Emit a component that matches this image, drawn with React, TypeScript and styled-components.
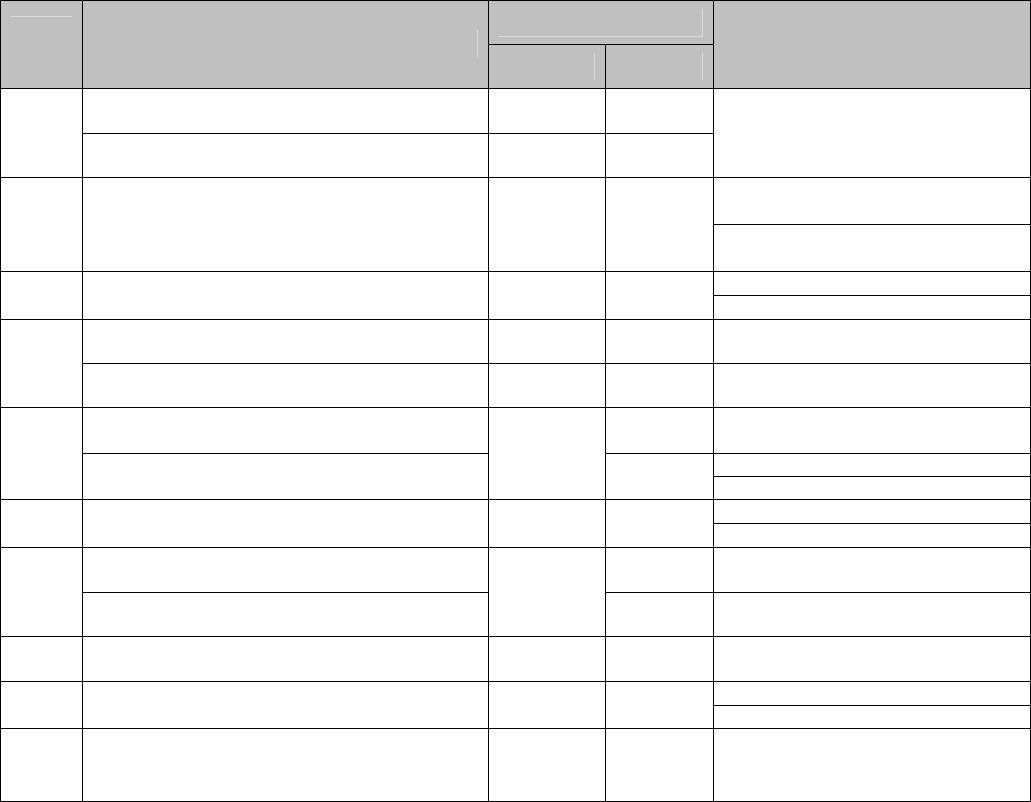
import React from "react";
import styled, { createGlobalStyle } from "styled-components";

const GlobalStyle = createGlobalStyle`
  html, body {
    margin: 0;
    padding: 0;
    background: #ffffff;
    font-family: "Liberation Sans", Arial, sans-serif;
  }
`;

// track heights, each includes the 1px bottom rule
const ROWS = [44, 44, 45, 44, 47, 47, 24, 24, 44, 44, 46, 23, 23, 24, 24, 45, 44, 45, 24, 23, 73];

const Sheet = styled.div`
  display: grid;
  grid-template-columns: 82px 406px 117px 108px 317px;
  grid-template-rows: ${ROWS.map((h) => `${h}px`).join(" ")};
  width: 1031px;
  box-sizing: border-box;
  border-top: 1px solid #000;
  border-left: 1px solid #000;
`;

interface CellProps {
  $row: number;
  $col: number;
  $rowSpan?: number;
  $colSpan?: number;
  $head?: boolean;
}

const Cell = styled.div<CellProps>`
  position: relative;
  box-sizing: border-box;
  grid-row: ${(p) => p.$row} / span ${(p) => p.$rowSpan || 1};
  grid-column: ${(p) => p.$col} / span ${(p) => p.$colSpan || 1};
  border-right: 1px solid #000;
  border-bottom: 1px solid #000;
  background: ${(p) => (p.$head ? "#c0c0c0" : "#ffffff")};
`;

// faint embossed marks left in the header cells
const Mark = styled.span<{ $x: number; $y: number; $w: number; $h: number }>`
  position: absolute;
  left: ${(p) => p.$x}px;
  top: ${(p) => p.$y}px;
  width: ${(p) => p.$w}px;
  height: ${(p) => p.$h}px;
  background: #dcdcdc;
`;

type Span = [number, number]; // [start track, span]

interface Group {
  start: number;
  span: number;
  c2: Span[];
  c3: Span[];
  c4: Span[];
  c5: Span[];
}

const whole = (s: number, n: number): Span[] => [[s, n]];
const each = (s: number, n: number): Span[] =>
  Array.from({ length: n }, (_, i) => [s + i, 1] as Span);

const groups: Group[] = [
  { start: 3, span: 2, c2: each(3, 2), c3: each(3, 2), c4: each(3, 2), c5: whole(3, 2) },
  { start: 5, span: 2, c2: whole(5, 2), c3: whole(5, 2), c4: whole(5, 2), c5: each(5, 2) },
  { start: 7, span: 2, c2: whole(7, 2), c3: whole(7, 2), c4: whole(7, 2), c5: each(7, 2) },
  { start: 9, span: 2, c2: each(9, 2), c3: each(9, 2), c4: each(9, 2), c5: each(9, 2) },
  {
    start: 11,
    span: 3,
    c2: [[11, 1], [12, 2]],
    c3: whole(11, 3),
    c4: [[11, 1], [12, 2]],
    c5: each(11, 3),
  },
  { start: 14, span: 2, c2: whole(14, 2), c3: whole(14, 2), c4: whole(14, 2), c5: each(14, 2) },
  { start: 16, span: 2, c2: each(16, 2), c3: whole(16, 2), c4: each(16, 2), c5: each(16, 2) },
  { start: 18, span: 1, c2: each(18, 1), c3: each(18, 1), c4: each(18, 1), c5: each(18, 1) },
  { start: 19, span: 2, c2: whole(19, 2), c3: whole(19, 2), c4: whole(19, 2), c5: each(19, 2) },
  { start: 21, span: 1, c2: each(21, 1), c3: each(21, 1), c4: each(21, 1), c5: each(21, 1) },
];

const App: React.FC = () => {
  return (
    <>
      <GlobalStyle />
      <Sheet>
        <Cell $head $row={1} $col={1} $rowSpan={2}>
          <Mark $x={10} $y={15} $w={61} $h={1} />
        </Cell>
        <Cell $head $row={1} $col={2} $rowSpan={2}>
          <Mark $x={394} $y={29} $w={1} $h={27} />
        </Cell>
        <Cell $head $row={1} $col={3} $colSpan={2}>
          <Mark $x={10} $y={35} $w={204} $h={1} />
          <Mark $x={213} $y={8} $w={1} $h={28} />
        </Cell>
        <Cell $head $row={2} $col={3}>
          <Mark $x={105} $y={8} $w={1} $h={27} />
        </Cell>
        <Cell $head $row={2} $col={4}>
          <Mark $x={96} $y={8} $w={1} $h={27} />
        </Cell>
        <Cell $head $row={1} $col={5} $rowSpan={2} />

        {groups.map((g) => (
          <React.Fragment key={g.start}>
            <Cell $row={g.start} $col={1} $rowSpan={g.span} />
            {[g.c2, g.c3, g.c4, g.c5].map((cells, ci) =>
              cells.map(([r, n]) => (
                <Cell key={`${ci}-${r}`} $row={r} $col={ci + 2} $rowSpan={n} />
              ))
            )}
          </React.Fragment>
        ))}
      </Sheet>
    </>
  );
};

export default App;
